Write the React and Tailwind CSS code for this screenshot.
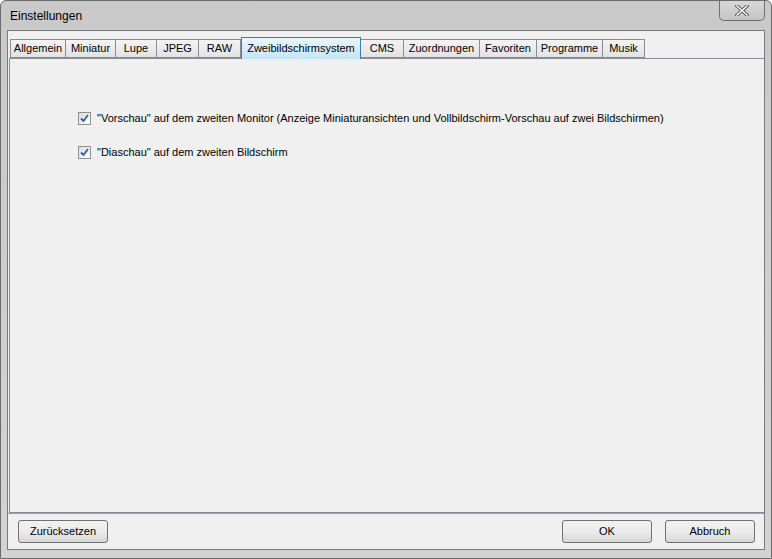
import { useState } from "react";

const tabs = [
  { label: "Allgemein", w: 56 },
  { label: "Miniatur", w: 50 },
  { label: "Lupe", w: 41 },
  { label: "JPEG", w: 42 },
  { label: "RAW", w: 42 },
  { label: "Zweibildschirmsystem", w: 120 },
  { label: "CMS", w: 43 },
  { label: "Zuordnungen", w: 76 },
  { label: "Favoriten", w: 57 },
  { label: "Programme", w: 66 },
  { label: "Musik", w: 42 },
];

function Check({ checked, onChange, children }) {
  return (
    <label className="flex items-center gap-[6px] leading-[14px] cursor-default" onClick={onChange}>
      <span className="w-[13px] h-[13px] border border-[#8e8f8f] bg-gradient-to-br from-[#dcdcdc] to-[#ffffff] flex items-center justify-center">
        {checked && (
          <svg width="9" height="9" viewBox="0 0 9 9">
            <path d="M1 4.5 L3.5 7 L8 1" fill="none" stroke="#2b5fa8" strokeWidth="1.8" />
          </svg>
        )}
      </span>
      <span>{children}</span>
    </label>
  );
}

function Btn({ children, className = "" }) {
  return (
    <button
      className={`h-[23px] w-[90px] rounded-[3px] border border-[#707070] bg-gradient-to-b from-[#f2f2f2] via-[#ebebeb] to-[#d6d6d6] text-[11px] text-black ${className}`}
    >
      {children}
    </button>
  );
}

export default function App() {
  const [active, setActive] = useState("Zweibildschirmsystem");
  const [vorschau, setVorschau] = useState(true);
  const [diaschau, setDiaschau] = useState(true);

  return (
    <div
      className="w-[772px] h-[559px] flex flex-col bg-gradient-to-b from-[#c9c9c9] to-[#d3d3d3] border border-[#6b6b6b] rounded-t-[6px] relative overflow-hidden"
      style={{ fontFamily: "'Liberation Sans', Arial, sans-serif" }}
    >
      <div className="h-[29px] flex items-center pl-[9px] text-[12px] text-black">
        Einstellungen
      </div>
      <div className="absolute top-0 right-[6px] w-[46px] h-[20px] rounded-b-[5px] border border-t-0 border-[#6e6e6e] bg-gradient-to-b from-[#d8d8d8] to-[#c4c4c4] flex items-center justify-center">
        <svg width="14" height="11" viewBox="0 0 14 11">
          <path d="M2 1 L12 10 M12 1 L2 10" stroke="#444" strokeWidth="3.2" strokeLinecap="square" />
          <path d="M2 1 L12 10 M12 1 L2 10" stroke="#fff" strokeWidth="1.6" strokeLinecap="square" />
        </svg>
      </div>

      <div className="flex-1 mx-[6px] mb-[8px] flex flex-col bg-[#f0f0f0] border border-[#7a7a7a]">
        <div className="flex items-end pl-[2px] pt-[5px] h-[27px]">
          {tabs.map((t) => {
            const sel = t.label === active;
            return (
              <div
                key={t.label}
                onClick={() => setActive(t.label)}
                style={{ width: t.w }}
                className={
                  sel
                    ? "h-[22px] -mb-px z-10 flex items-center justify-center text-[11px] text-black border border-b-0 border-[#3c7fb1] bg-gradient-to-b from-[#eaf6fd] to-[#c6e5f7]"
                    : "h-[19px] flex items-center justify-center text-[11px] text-black border border-[#898c95] border-l-0 first:border-l bg-gradient-to-b from-[#f3f3f3] to-[#e3e3e3]"
                }
              >
                {t.label}
              </div>
            );
          })}
        </div>
        <div className="flex-1 ml-[1px] border border-r-0 border-[#898c95] bg-[#f0f0f0] flex flex-col gap-[20px] pt-[52px] pl-[68px] text-[11px] text-black">
          <Check checked={vorschau} onChange={() => setVorschau(!vorschau)}>
            "Vorschau" auf dem zweiten Monitor (Anzeige Miniaturansichten und Vollbildschirm-Vorschau auf zwei Bildschirmen)
          </Check>
          <Check checked={diaschau} onChange={() => setDiaschau(!diaschau)}>
            "Diaschau" auf dem zweiten Bildschirm
          </Check>
        </div>
        <div className="h-[36px] flex items-center px-[10px] border-t border-[#a0a0a0]">
          <Btn>Zurücksetzen</Btn>
          <div className="flex-1" />
          <Btn className="mr-[13px]">OK</Btn>
          <Btn className="mr-[-1px]">Abbruch</Btn>
        </div>
      </div>
    </div>
  );
}
